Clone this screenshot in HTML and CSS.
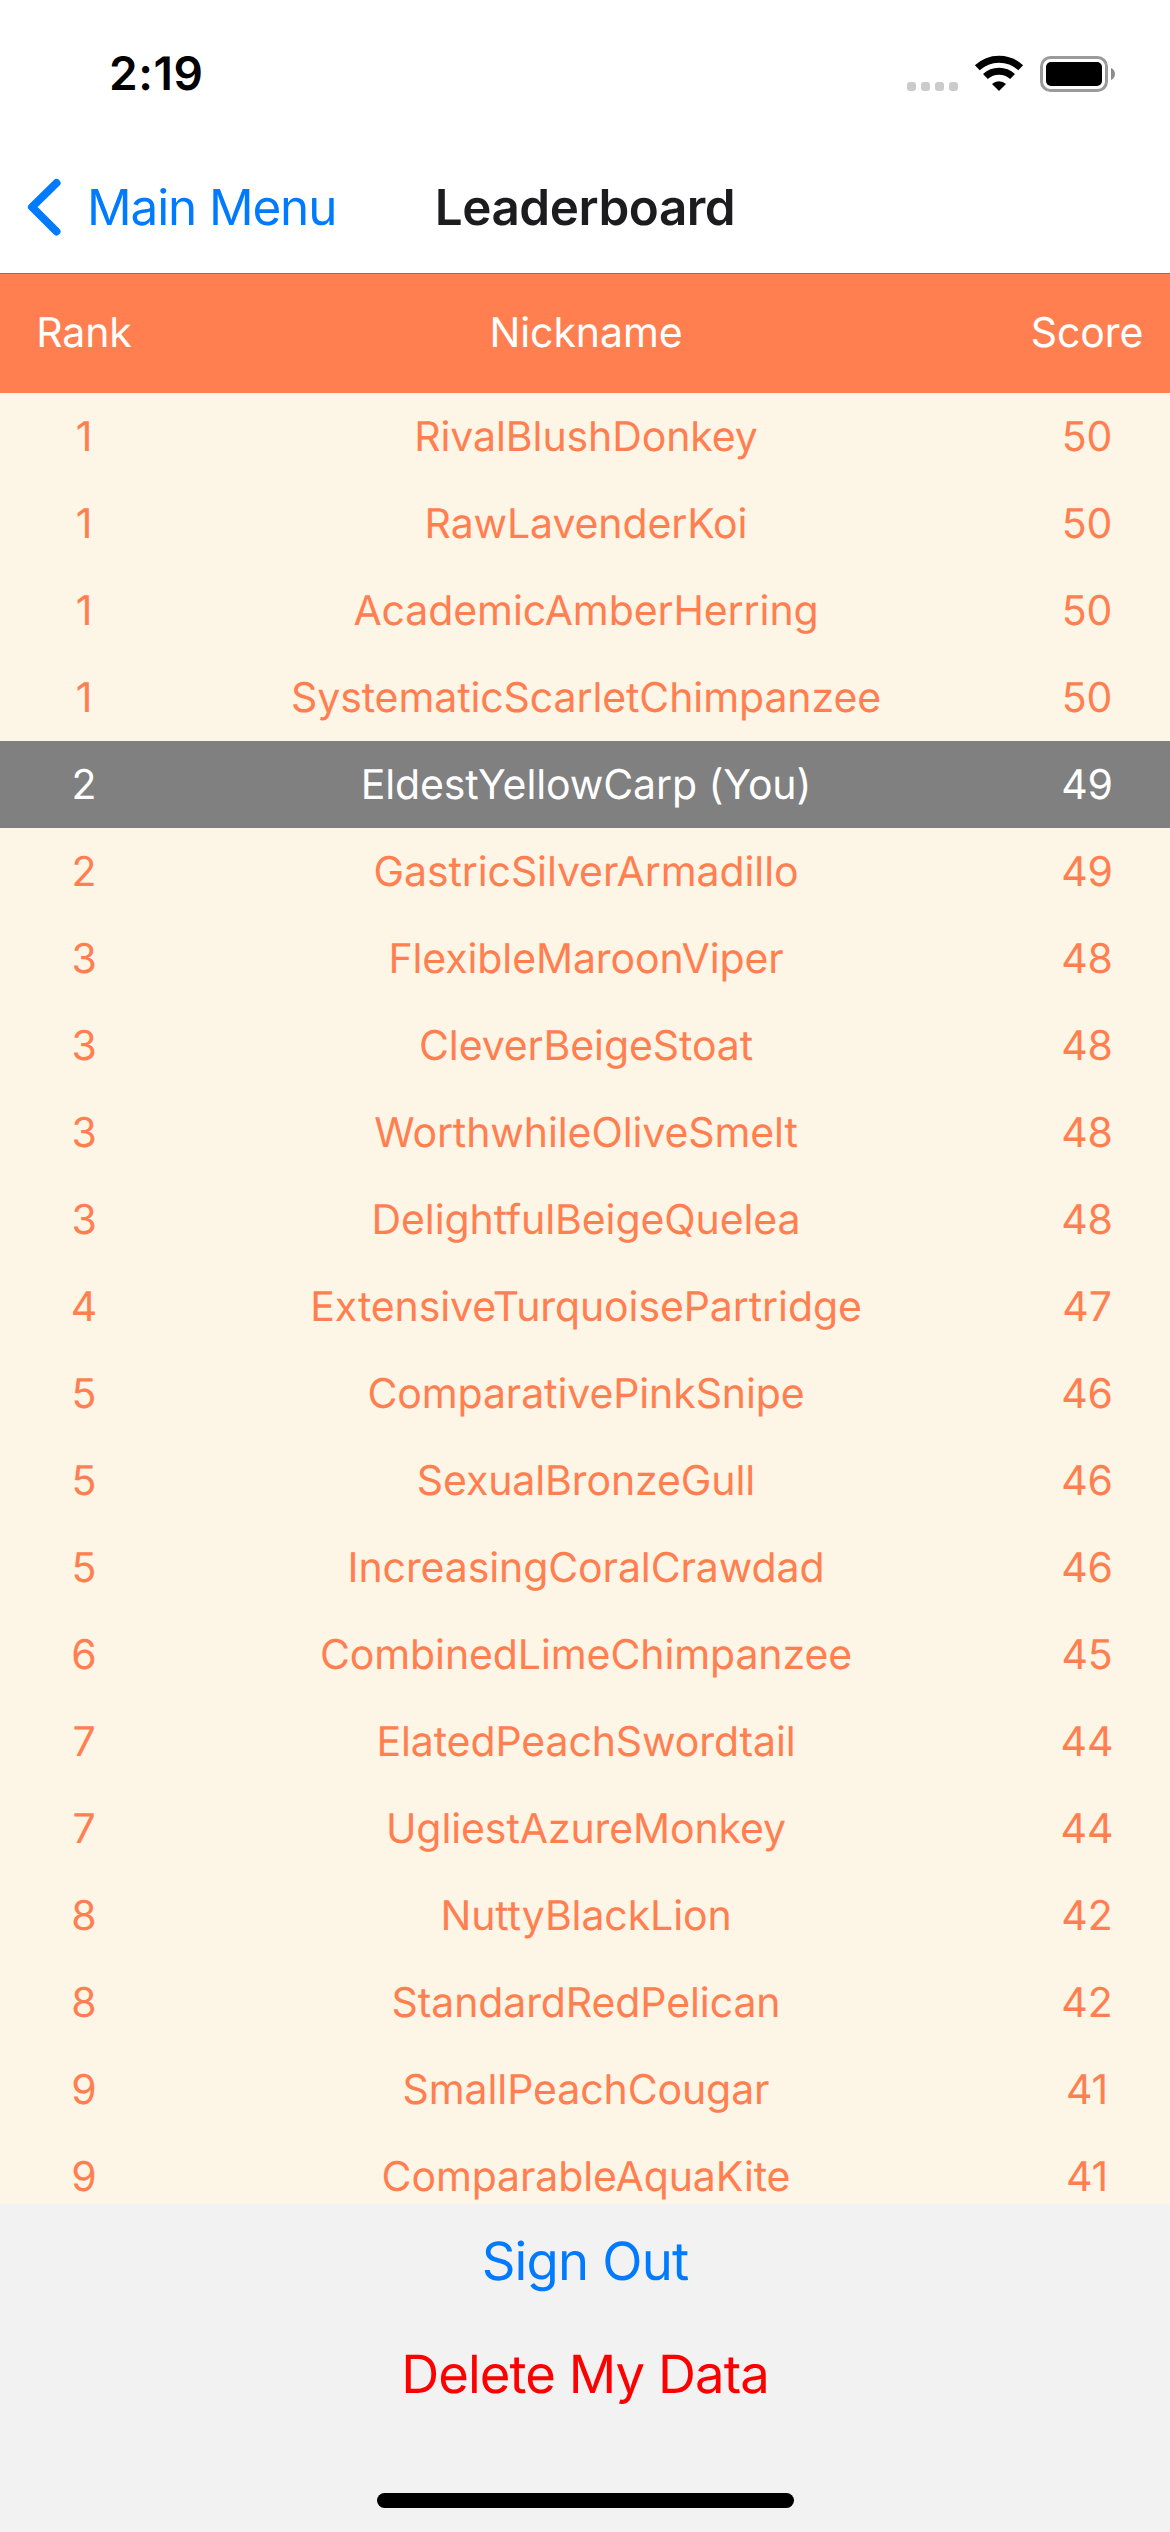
FILE: index.html
```html
<!DOCTYPE html>
<html lang="en">
<head>
<meta charset="utf-8">
<title>Leaderboard</title>
<link rel="stylesheet" href="styles.css">
</head>
<body>
<div class="screen">
  <div class="status-bar">
    <span class="time">2:19</span>
    <svg class="status-icons" width="210" height="40" viewBox="906 54 210 40" aria-hidden="true">
      <g fill="#cbcbcb">
        <rect x="907" y="82" width="9" height="9" rx="3"/>
        <rect x="921" y="82" width="9" height="9" rx="3"/>
        <rect x="935" y="82" width="9" height="9" rx="3"/>
        <rect x="949" y="82" width="9" height="9" rx="3"/>
      </g>
      <path d="M977.3 67.8A31.5 31.5 0 0 1 1020.7 67.8M985.4 76.5A20 20 0 0 1 1012.6 76.5" fill="none" stroke="#000" stroke-width="7"/>
      <path d="M999 91L992 84A10 10 0 0 1 1006 84Z" fill="#000"/>
      <rect x="1041.5" y="57.5" width="65" height="33" rx="9" fill="none" stroke="#9b9b9b" stroke-width="3"/>
      <rect x="1046" y="62" width="56" height="24" rx="5" fill="#000"/>
      <path d="M1111 68C1116.300 70 1116.300 78 1111 80Z" fill="#8c8c8c"/>
    </svg>
  </div>
  <header class="nav-bar">
    <a class="back">
      <svg class="chevron" width="36" height="60" viewBox="0 0 36 60" aria-hidden="true"><path d="M30.500 6L6 30L30.500 54.500" fill="none" stroke="#007aff" stroke-width="8" stroke-linecap="round" stroke-linejoin="round"/></svg>
      <span class="back-label">Main Menu</span>
    </a>
    <h1 class="title">Leaderboard</h1>
  </header>
  <div class="row table-head"><span>Rank</span><span>Nickname</span><span>Score</span></div>
  <main class="list">
    <div class="row"><span>1</span><span>RivalBlushDonkey</span><span>50</span></div>
    <div class="row"><span>1</span><span>RawLavenderKoi</span><span>50</span></div>
    <div class="row"><span>1</span><span>AcademicAmberHerring</span><span>50</span></div>
    <div class="row"><span>1</span><span>SystematicScarletChimpanzee</span><span>50</span></div>
    <div class="row current"><span>2</span><span>EldestYellowCarp (You)</span><span>49</span></div>
    <div class="row"><span>2</span><span>GastricSilverArmadillo</span><span>49</span></div>
    <div class="row"><span>3</span><span>FlexibleMaroonViper</span><span>48</span></div>
    <div class="row"><span>3</span><span>CleverBeigeStoat</span><span>48</span></div>
    <div class="row"><span>3</span><span>WorthwhileOliveSmelt</span><span>48</span></div>
    <div class="row"><span>3</span><span>DelightfulBeigeQuelea</span><span>48</span></div>
    <div class="row"><span>4</span><span>ExtensiveTurquoisePartridge</span><span>47</span></div>
    <div class="row"><span>5</span><span>ComparativePinkSnipe</span><span>46</span></div>
    <div class="row"><span>5</span><span>SexualBronzeGull</span><span>46</span></div>
    <div class="row"><span>5</span><span>IncreasingCoralCrawdad</span><span>46</span></div>
    <div class="row"><span>6</span><span>CombinedLimeChimpanzee</span><span>45</span></div>
    <div class="row"><span>7</span><span>ElatedPeachSwordtail</span><span>44</span></div>
    <div class="row"><span>7</span><span>UgliestAzureMonkey</span><span>44</span></div>
    <div class="row"><span>8</span><span>NuttyBlackLion</span><span>42</span></div>
    <div class="row"><span>8</span><span>StandardRedPelican</span><span>42</span></div>
    <div class="row"><span>9</span><span>SmallPeachCougar</span><span>41</span></div>
    <div class="row"><span>9</span><span>ComparableAquaKite</span><span>41</span></div>
  </main>
  <footer class="actions">
    <a class="action sign-out">Sign Out</a>
    <a class="action delete">Delete My Data</a>
    <div class="home-indicator"></div>
  </footer>
</div>
</body>
</html>
```

FILE: styles.css
```css
* { box-sizing: border-box; }

body {
  margin: 0;
  background: #fff;
  font-family: Inter, "Liberation Sans", sans-serif;
  text-rendering: geometricPrecision;
}

.screen {
  width: 1170px;
  height: 2532px;
  display: flex;
  flex-direction: column;
  overflow: hidden;
}

.status-bar {
  height: 141px;
  flex: none;
  display: flex;
  justify-content: space-between;
  align-items: flex-start;
  padding: 54px 54px 0 109px;
}

.time {
  font-size: 46px;
  font-weight: 600;
  line-height: 41px;
  letter-spacing: 0.6px;
}

.status-icons { display: block; }

.nav-bar {
  height: 132px;
  flex: none;
  display: grid;
  grid-template-columns: 1fr auto 1fr;
  align-items: center;
  padding: 0 26px;
  line-height: 60px;
}

.back {
  display: flex;
  align-items: center;
  color: #007aff;
  font-size: 49.4px;
}

.chevron { display: block; }

.back-label { margin-left: 25px; letter-spacing: -1.1px; }

.title {
  margin: 0;
  color: #1c1c1e;
  font-size: 49.4px;
  font-weight: 600;
  letter-spacing: -0.45px;
}

.row {
  height: 87px;
  flex: none;
  display: grid;
  grid-template-columns: 168px 1fr 166px;
  align-items: center;
  text-align: center;
  padding-bottom: 2px;
  color: #ff7f50;
  font-size: 41px;
  line-height: 50px;
  letter-spacing: -0.1px;
  white-space: nowrap;
}

.table-head {
  height: 120px;
  padding-bottom: 3px;
  border-top: 1px solid #b5623f;
  background: #ff7f50;
  color: #fff;
}

.list {
  height: 1811px;
  flex: none;
  overflow: hidden;
  background: #fdf5e6;
}

.current { background: #808080; color: #fff; }

.actions {
  flex: 1;
  display: flex;
  flex-direction: column;
  align-items: center;
  padding-top: 1px;
  background: #f2f2f2;
  font-size: 52.6px;
}

.action { line-height: 113px; letter-spacing: -0.8px; }
.sign-out { color: #007aff; }
.delete { color: #f00; letter-spacing: -0.95px; }

.home-indicator {
  width: 417px;
  height: 15px;
  margin-top: 62px;
  border-radius: 8px;
  background: #000;
}
```
